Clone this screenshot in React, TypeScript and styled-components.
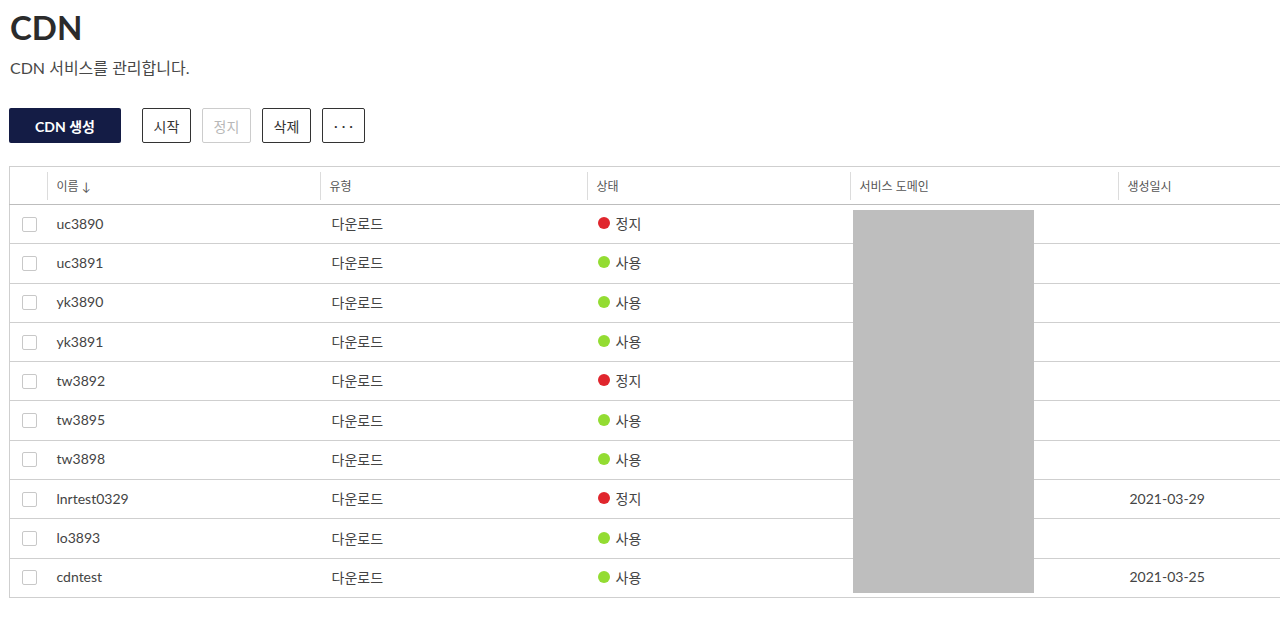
import React, { FC } from 'react';
import styled, { createGlobalStyle } from 'styled-components';

type Status = 'stop' | 'use';

interface CdnRow {
  name: string;
  type: string;
  status: Status;
  createdAt?: string;
}

const rows: CdnRow[] = [
  { name: 'uc3890', type: '다운로드', status: 'stop' },
  { name: 'uc3891', type: '다운로드', status: 'use' },
  { name: 'yk3890', type: '다운로드', status: 'use' },
  { name: 'yk3891', type: '다운로드', status: 'use' },
  { name: 'tw3892', type: '다운로드', status: 'stop' },
  { name: 'tw3895', type: '다운로드', status: 'use' },
  { name: 'tw3898', type: '다운로드', status: 'use' },
  { name: 'lnrtest0329', type: '다운로드', status: 'stop', createdAt: '2021-03-29' },
  { name: 'lo3893', type: '다운로드', status: 'use' },
  { name: 'cdntest', type: '다운로드', status: 'use', createdAt: '2021-03-25' },
];

const App: FC = () => {
  return (
    <>
      <GlobalStyle />
      <Page>
        <Title>CDN</Title>
        <Subtitle>CDN 서비스를 관리합니다.</Subtitle>
        <Toolbar>
          <PrimaryButton>CDN 생성</PrimaryButton>
          <ButtonGroup>
            <OutlineButton>시작</OutlineButton>
            <OutlineButton disabled>정지</OutlineButton>
            <OutlineButton>삭제</OutlineButton>
            <OutlineButton $more>···</OutlineButton>
          </ButtonGroup>
        </Toolbar>
        <TableWrap>
          <Table>
            <colgroup>
              <col style={{ width: 37 }} />
              <col style={{ width: 273 }} />
              <col style={{ width: 267 }} />
              <col style={{ width: 263 }} />
              <col style={{ width: 268 }} />
              <col />
            </colgroup>
            <thead>
              <tr>
                <HeadCell $first />
                <HeadCell>이름 ↓</HeadCell>
                <HeadCell>유형</HeadCell>
                <HeadCell>상태</HeadCell>
                <HeadCell>서비스 도메인</HeadCell>
                <HeadCell>생성일시</HeadCell>
              </tr>
            </thead>
            <tbody>
              {rows.map((row) => (
                <Row key={row.name}>
                  <CheckCell>
                    <CheckBox />
                  </CheckCell>
                  <Cell $pad={10}>{row.name}</Cell>
                  <Cell>{row.type}</Cell>
                  <Cell $pad={11}>
                    <StatusLabel>
                      <Dot $status={row.status} />
                      {row.status === 'stop' ? '정지' : '사용'}
                    </StatusLabel>
                  </Cell>
                  <Cell />
                  <Cell>{row.createdAt}</Cell>
                </Row>
              ))}
            </tbody>
          </Table>
          <Redaction />
        </TableWrap>
      </Page>
    </>
  );
};

const GlobalStyle = createGlobalStyle`
  html, body {
    margin: 0;
    padding: 0;
    background: #ffffff;
  }
  body {
    font-family: Lato, "Noto Sans CJK KR", sans-serif;
    color: #333333;
  }
`;

const Page = styled.div`
  width: 1280px;
  padding: 6px 0 0 9px;
  box-sizing: border-box;
  overflow: hidden;
`;

const Title = styled.h1`
  margin: 0;
  font-size: 33px;
  line-height: 42px;
  font-weight: 700;
  color: #2b2b2b;
  padding-left: 1px;
`;

const Subtitle = styled.p`
  margin: 9px 0 0 1px;
  font-size: 16px;
  line-height: 22px;
  color: #484848;
`;

const Toolbar = styled.div`
  display: flex;
  align-items: center;
  margin-top: 29px;
  gap: 21px;
`;

const ButtonGroup = styled.div`
  display: flex;
  gap: 11px;
`;

const PrimaryButton = styled.button`
  width: 112px;
  height: 35px;
  border: none;
  border-radius: 2px;
  background: #141c45;
  color: #ffffff;
  font-family: Lato, "Noto Sans CJK KR", sans-serif;
  font-size: 14px;
  font-weight: 700;
`;

const OutlineButton = styled.button<{ $more?: boolean }>`
  width: ${(p) => (p.$more ? '43px' : '49px')};
  height: 35px;
  padding: 0;
  border: 1px solid #333333;
  border-radius: 2px;
  background: #ffffff;
  color: #333333;
  font-family: Lato, "Noto Sans CJK KR", sans-serif;
  font-size: 14px;
  letter-spacing: ${(p) => (p.$more ? '4px' : '0')};
  text-indent: ${(p) => (p.$more ? '4px' : '0')};

  &:disabled {
    border-color: #cccccc;
    color: #b8b8b8;
  }
`;

const TableWrap = styled.div`
  position: relative;
  margin-top: 23px;
`;

const Table = styled.table`
  border-collapse: collapse;
  width: calc(100% + 40px);
  table-layout: fixed;
  border: 1px solid #cfcfcf;
`;

const HeadCell = styled.th<{ $first?: boolean }>`
  position: relative;
  height: 36px;
  padding: 0 0 1px 10px;
  text-align: left;
  font-size: 12px;
  font-weight: 400;
  color: #555555;
  border-bottom: 1px solid #bdbdbd;

  &::before {
    content: '';
    display: ${(p) => (p.$first ? 'none' : 'block')};
    position: absolute;
    left: 0;
    top: 5px;
    bottom: 4px;
    width: 1px;
    background: #dcdcdc;
  }
`;

const Row = styled.tr`
  height: 39.3px;
  border-bottom: 1px solid #cfcfcf;
`;

const Cell = styled.td<{ $pad?: number }>`
  padding: 0 0 2px ${(p) => p.$pad ?? 12}px;
  font-size: 14px;
  color: #444444;
  white-space: nowrap;
`;

const CheckCell = styled.td`
  padding: 0 0 0 12px;
`;

const CheckBox = styled.span`
  display: block;
  width: 13px;
  height: 13px;
  border: 1px solid #c8c8c8;
  border-radius: 2px;
  background: #ffffff;
`;

const StatusLabel = styled.span`
  display: inline-flex;
  align-items: center;
  gap: 6px;
`;

const Dot = styled.span<{ $status: Status }>`
  width: 12px;
  height: 12px;
  border-radius: 50%;
  background: ${(p) => (p.$status === 'stop' ? '#e0262d' : '#93dc32')};
`;

const Redaction = styled.div`
  position: absolute;
  left: 844px;
  top: 44px;
  width: 181px;
  height: 383px;
  background: #bebebe;
`;

export default App;
